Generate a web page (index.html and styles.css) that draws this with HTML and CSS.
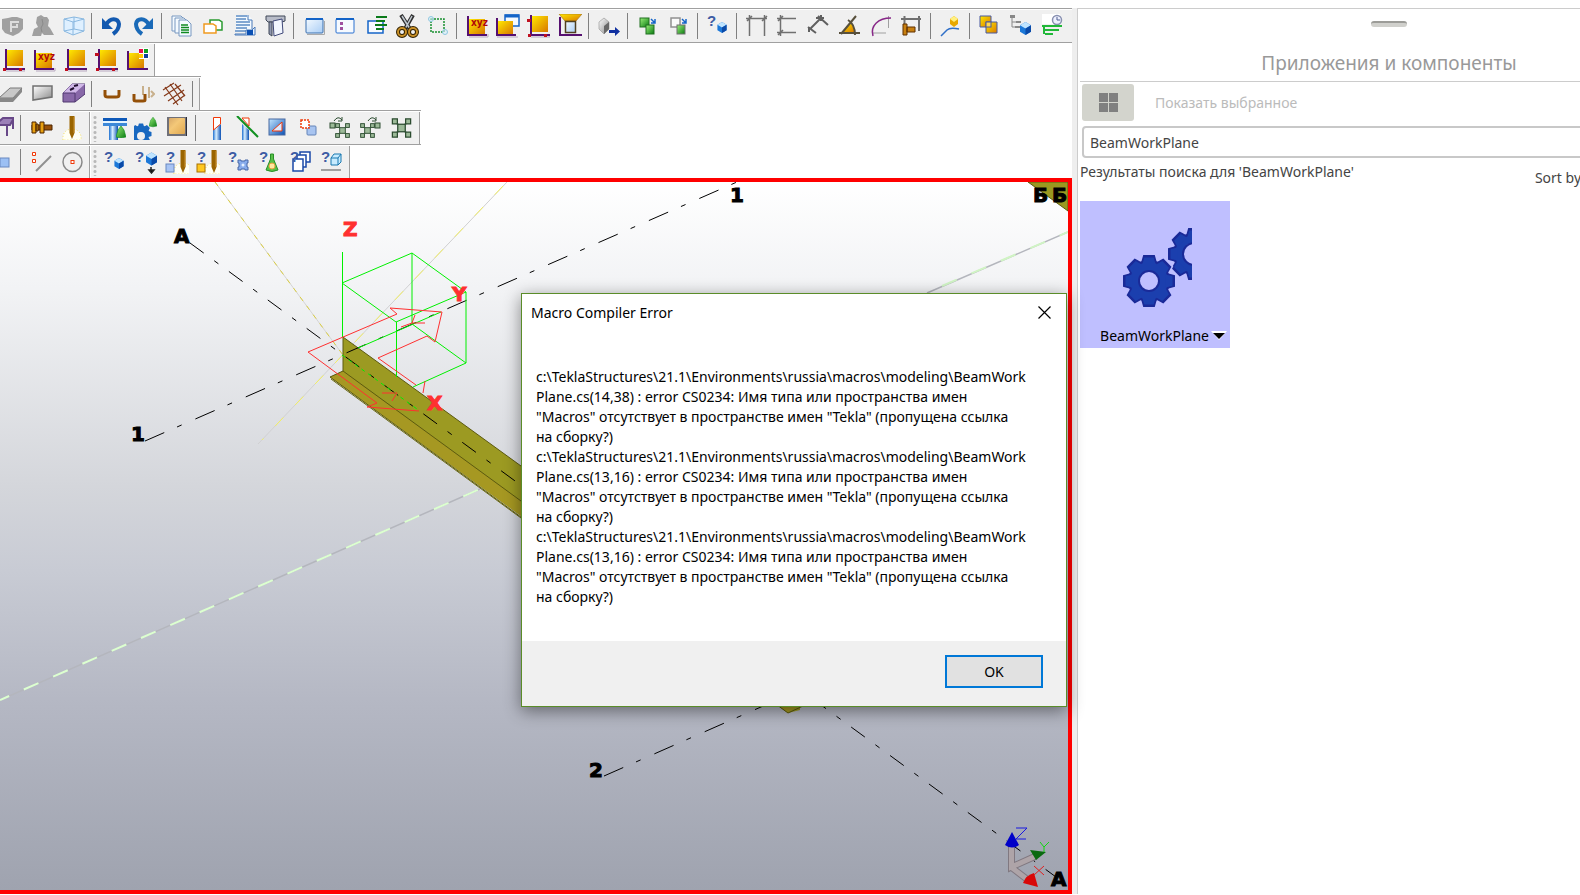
FILE: index.html
```html
<!DOCTYPE html>
<html lang="ru">
<head>
<meta charset="utf-8">
<title>Tekla Structures</title>
<link rel="stylesheet" href="styles.css">
</head>
<body>
<svg class="defs" aria-hidden="true">
  <defs>
    <linearGradient id="gy" x1="0" y1="0" x2="1" y2="1"><stop offset="0" stop-color="#ffe800"/><stop offset="1" stop-color="#d87800"/></linearGradient>
    <linearGradient id="gb" x1="0" y1="0" x2="1" y2="1"><stop offset="0" stop-color="#c4e6ff"/><stop offset="1" stop-color="#0a50b4"/></linearGradient>
    <linearGradient id="gl" x1="0" y1="0" x2="1" y2="1"><stop offset="0" stop-color="#f4faff"/><stop offset="1" stop-color="#a9cdf5"/></linearGradient>
    <linearGradient id="gg" x1="0" y1="0" x2="1" y2="1"><stop offset="0" stop-color="#9cf07a"/><stop offset="1" stop-color="#087a10"/></linearGradient>
    <linearGradient id="gs" x1="0" y1="0" x2="1" y2="1"><stop offset="0" stop-color="#ffffff"/><stop offset="1" stop-color="#8a8a8a"/></linearGradient>
    <linearGradient id="gt" x1="0" y1="0" x2="1" y2="0"><stop offset="0" stop-color="#1d6fd0"/><stop offset=".4" stop-color="#d8efff"/><stop offset="1" stop-color="#0a50b4"/></linearGradient>
    <linearGradient id="gk" x1="0" y1="0" x2="1" y2="1"><stop offset="0" stop-color="#d8a868"/><stop offset=".4" stop-color="#f4c878"/><stop offset="1" stop-color="#e0a850"/></linearGradient>
    <linearGradient id="gv" x1="0" y1="0" x2="0" y2="1"><stop offset="0" stop-color="#ffffff"/><stop offset=".15" stop-color="#f2f3f5"/><stop offset=".43" stop-color="#d4d6db"/><stop offset=".55" stop-color="#c8cbd4"/><stop offset=".73" stop-color="#b5b8c4"/><stop offset="1" stop-color="#9fa3af"/></linearGradient>
    <symbol id="axes" viewBox="0 0 24 24"><path d="M5 23H24V20" stroke="#b8a8c0" fill="none"/><path d="M5 1V21H24" fill="none" stroke="#561070" stroke-width="2"/></symbol>
    <symbol id="plane" viewBox="0 0 24 24"><use href="#axes"/><rect x="6" y="2" width="16" height="16" fill="url(#gy)"/></symbol>
    <symbol id="xyz" viewBox="0 0 24 24"><path d="M4 23H23V20" stroke="#b8a8c0" fill="none"/><path d="M3 2V21H22" fill="none" stroke="#561070" stroke-width="2"/><rect x="4" y="5" width="16" height="15" fill="url(#gy)"/><text x="6" y="12" class="xyz">xyz</text></symbol>
    <symbol id="cube" viewBox="0 0 10 12"><path d="M5 0L10 3V9L5 12L0 9V3Z" fill="#1c78d8"/><path d="M5 0L10 3L5 6L0 3Z" fill="#bfe4ff"/><path d="M5 6L10 3V9L5 12Z" fill="#0a4aa8"/></symbol>
    <symbol id="ask" viewBox="0 0 24 24"><text x="1" y="12" class="ask">?</text></symbol>
    <symbol id="weld" viewBox="0 0 24 24"><path d="M3 24C2 16 8 12 12 14C17 12 22 17 21 24Z" fill="#fffff4" stroke="#f4e26a" stroke-dasharray="1 2"/><path d="M9.500 0H14.500V17L12 23L9.500 17Z" fill="#9a6400"/><path d="M14 1V17" stroke="#c89030"/></symbol>
    <symbol id="flask" viewBox="0 0 10 12"><path d="M5 0L8 4L10 11L5 12L0 11L2 4Z" fill="url(#gg)" stroke="#0a8a1a" stroke-width=".6"/></symbol>
    <symbol id="nodes" viewBox="0 0 16 16"><path d="M2 2L14 14M14 2L2 14" stroke="#8ca08c" stroke-width="1.500"/><g fill="#9cba98" stroke="#2c4c30"><rect x="5" y="5" width="6" height="6"/><rect x=".7" y=".7" width="4" height="4"/><rect x="11.300" y=".7" width="4" height="4"/><rect x=".7" y="11.300" width="4" height="4"/><rect x="11.300" y="11.300" width="4" height="4"/></g></symbol>
    <g id="gear"><circle r="20"/><path d="M-5-25H5L7-18H-7ZM-5 25H5L7 18H-7ZM-25-5V5L-18 7V-7ZM25-5V5L18 7V-7Z"/><path transform="rotate(45)" d="M-5-25H5L7-18H-7ZM-5 25H5L7 18H-7ZM-25-5V5L-18 7V-7ZM25-5V5L18 7V-7Z"/></g>
  </defs>
</svg>

<div class="app">
  <main class="work">
    <div class="band band-first">
      <div class="toolbar from-edge" role="toolbar" aria-label="Стандартная">
        <button aria-label="Модель"><svg viewBox="0 0 24 24"><path d="M3 5L9 4L13 3L18 3L24 5V15L20 19L14 22L6 19L3 15Z" fill="#a0a0a0"/><path d="M12 18V8H20M12 13H18V10" stroke="#dcdcdc" stroke-width="2" fill="none"/></svg></button>
        <button aria-label="Пользователи"><svg viewBox="0 0 24 24"><path d="M2 22L4 15L8 13L6 9L7 3L11 1L14 3L17 3L19 6L18 12L20 14L24 21H14L12 19L11 22Z" fill="#a0a0a0"/><path d="M12 5L13 10L11 14L12 18" stroke="#8a8a8a" fill="none"/></svg></button>
        <button aria-label="Вид"><svg viewBox="0 0 24 24"><path d="M3 5L13 3L23 5V17L12 21L3 17Z" fill="#dff0ff" stroke="#8ab8e0"/><path d="M3 5L12 8L23 5M12 8V21M13 3V15L3 17M13 15L23 17" stroke="#8ab8e0" fill="none"/></svg></button>
        <i class="sep"></i>
        <button aria-label="Отменить"><svg viewBox="0 0 24 24"><path d="M6 11C10 3 18 4 19 10C19 14 16 18 13 20" fill="none" stroke="#1259b0" stroke-width="4"/><path d="M2 4V15H13L10 12L4 6Z" fill="#1259b0"/></svg></button>
        <button aria-label="Повторить"><svg viewBox="0 0 24 24"><path d="M18 11C14 3 6 4 5 10C5 14 8 18 11 20" fill="none" stroke="#1a6ab8" stroke-width="4"/><path d="M22 4V15H11L14 12L20 6Z" fill="#1a6ab8"/></svg></button>
        <i class="sep"></i>
        <button aria-label="Отчеты"><svg viewBox="0 0 24 24"><g fill="#f4faff" stroke="#7898c0"><path d="M2 2H11L14 5V17H2Z"/><path d="M5 4H14L17 7V19H5Z"/><path d="M9 6H17L21 10V22H9Z"/></g><path d="M11 11H18M11 13.500H19M11 16H19M11 18.500H19" stroke="#0f8a20" stroke-width="1.500"/></svg></button>
        <button aria-label="Чертежи"><svg viewBox="0 0 24 24"><path d="M9 6H18L21 8V16H9Z" fill="#fff" stroke="#2a9a30" stroke-width="1.500"/><path d="M3 10H12L15 12V19H3Z" fill="#fff" stroke="#f09a20" stroke-width="1.500"/></svg></button>
        <button aria-label="Список чертежей"><svg viewBox="0 0 24 24"><path d="M4 1H16L20 5V17H4Z" fill="#f4faff"/><path d="M16 1V6H20V15" fill="none" stroke="#4878b8"/><path d="M4 2H15M4 5H14M4 8H18M4 11H18M4 14H15M3 17H14" stroke="#5c8cc4" stroke-width="1.500"/><path d="M3 20H14V16H20L23 13V21H3Z" fill="#e8f2ff" stroke="#4878b8"/><path d="M15 16H21V21H15Z" fill="#0a50b4"/></svg></button>
        <button aria-label="Печать"><svg viewBox="0 0 24 24"><path d="M3 2H22V7L19 8H5L3 6Z" fill="#b8bcc8" stroke="#404858"/><path d="M6 8H9V22L6 20Z" fill="#9098b0" stroke="#404858"/><path d="M10 7L19 5L20 19L11 22Z" fill="#f2f6ff" stroke="#404878"/></svg></button>
        <i class="sep"></i>
        <button aria-label="Окно"><svg viewBox="0 0 24 24"><rect x="4" y="5" width="17" height="14" rx="1" fill="url(#gl)" stroke="#3a70b0"/><path d="M4 5H21" stroke="#1464c8" stroke-width="2"/><path d="M5 20.500H22.500V7" stroke="#aaa" fill="none"/></svg></button>
        <button aria-label="Свойства вида"><svg viewBox="0 0 24 24"><rect x="3" y="5" width="18" height="14" rx="1" fill="#f6faff" stroke="#2a70d0"/><path d="M3 5H21" stroke="#1464c8" stroke-width="2"/><path d="M7 8h3v3H7zM7 13h3v3H7z" fill="#a050a0"/></svg></button>
        <button aria-label="Список видов"><svg viewBox="0 0 24 24"><rect x="4" y="7" width="15" height="12" fill="#f6faff" stroke="#1464c8" stroke-width="1.500"/><path d="M12 3H23M12 7H21M11 11H23M12 15H20" stroke="#0a7a1a" stroke-width="2"/></svg></button>
        <button aria-label="Вырезать"><svg viewBox="0 0 24 24"><path d="M6 1L15 15M18 1L10 15" stroke="#303030" stroke-width="4"/><path d="M7 2L15 15M17 2L10 15" stroke="#c0c8d0" stroke-width="1.500"/><g fill="none"><circle cx="7" cy="18" r="4" stroke="#302000" stroke-width="4"/><circle cx="18" cy="18" r="4" stroke="#302000" stroke-width="4"/><circle cx="7" cy="18" r="4" stroke="#c89028" stroke-width="2"/><circle cx="18" cy="18" r="4" stroke="#c89028" stroke-width="2"/></g></svg></button>
        <button aria-label="Область"><svg viewBox="0 0 24 24"><rect x="5" y="5" width="13" height="13" fill="none" stroke="#189030" stroke-width="1.500" stroke-dasharray="2 1"/><circle cx="5" cy="5" r="2.500" fill="#d8f0ff" fill-opacity=".6" stroke="#90c8e0"/><circle cx="19" cy="18" r="2.500" fill="#d8f0ff" fill-opacity=".6" stroke="#90c8e0"/></svg></button>
        <i class="sep"></i>
        <button aria-label="Рабочая плоскость xyz"><svg viewBox="0 0 24 24"><use href="#xyz"/></svg></button>
        <button aria-label="Плоскость по виду"><svg viewBox="0 0 24 24"><path d="M1 23H22" stroke="#b8a8c0"/><path d="M1 4V21H20" fill="none" stroke="#561070" stroke-width="2"/><rect x="9" y="1" width="14" height="11" fill="#f4faff" stroke="#1464c8" stroke-width="1.500"/><path d="M9 2H23" stroke="#1464c8" stroke-width="3"/><rect x="2" y="7" width="15" height="13" fill="url(#gy)"/></svg></button>
        <button aria-label="Плоскость по точкам"><svg viewBox="0 0 24 24"><use href="#plane" x="-1"/><path d="M0 5h4v3H0zM1 20h3v3H1zM17 20h3v3h-3z" fill="#c01020"/></svg></button>
        <button aria-label="Плоскость детали"><svg viewBox="0 0 24 24"><path d="M2 3V21H24" fill="none" stroke="#561070" stroke-width="2"/><path d="M1 0H24L18 7H7Z" fill="url(#gy)" stroke="#a87820" stroke-width=".7"/><rect x="7.500" y="7.500" width="10" height="11" fill="url(#gl)" stroke="#504020" stroke-width="1.500"/></svg></button>
        <i class="sep"></i>
        <button aria-label="Переместить"><svg viewBox="0 0 24 24"><path d="M7 4L12 8V15L7 20L2 15V8Z" fill="url(#gs)" stroke="#909090" stroke-width=".6"/><path d="M7 12L12 8V15L7 20Z" fill="#686868"/><path d="M12 16H18V13L23 17.500L18 22V19H12Z" fill="#1030a0"/></svg></button>
        <i class="sep"></i>
        <button aria-label="Копировать свойства"><svg viewBox="0 0 24 24"><rect x="4" y="4" width="9" height="9" fill="url(#gg)" stroke="#207020"/><rect x="10" y="11" width="8" height="9" fill="url(#gg)" stroke="#207020"/><path d="M15 5L19 9M19 5V9H15" stroke="#1464c8" fill="none" stroke-width="1.500"/></svg></button>
        <button aria-label="Вставить свойства"><svg viewBox="0 0 24 24"><rect x="4" y="4" width="9" height="9" fill="#fafafa" stroke="#909090" stroke-width="1.500"/><rect x="10" y="11" width="8" height="9" fill="url(#gg)" stroke="#707070"/><path d="M15 5L19 9M19 5V9H15" stroke="#1464c8" fill="none" stroke-width="1.500"/></svg></button>
        <i class="sep"></i>
        <button aria-label="Запрос"><svg viewBox="0 0 24 24"><use href="#ask"/><use href="#cube" x="11" y="8" width="10" height="11"/></svg></button>
        <i class="sep"></i>
        <button aria-label="Размер X"><svg viewBox="0 0 24 24"><path d="M1 4.500H22M4.500 1V22M19.500 1V22M2 7L7 2M17 7L22 2" fill="none" stroke="#707070" stroke-width="1.500"/></svg></button>
        <button aria-label="Размер Y"><svg viewBox="0 0 24 24"><path d="M4.500 1V22M1 4.500H20M1 18.500H20M2 7L7 2M2 21L7 16" fill="none" stroke="#707070" stroke-width="1.500"/></svg></button>
        <button aria-label="Свободный размер"><svg viewBox="0 0 24 24"><path d="M3 15L14 4M1 13L9 19M11 2L21 11M2 18V13M9 4H17M14 1V7" fill="none" stroke="#606060" stroke-width="2"/></svg></button>
        <button aria-label="Угол"><svg viewBox="0 0 24 24"><path d="M4 18L12 9C15 11 17 14 17 18Z" fill="url(#gy)"/><path d="M1 19H22M3 20L18 2M10 6C15 9 17 15 17 21" fill="none" stroke="#58503c" stroke-width="2"/></svg></button>
        <button aria-label="Радиус"><svg viewBox="0 0 24 24"><path d="M4 19H17M19.500 2V14" stroke="#a0a0a0" fill="none"/><path d="M4 22C1 12 9 4 22 4" stroke="#882888" stroke-width="1.500" fill="none"/></svg></button>
        <button aria-label="Размер болта"><svg viewBox="0 0 24 24"><path d="M1 5H21M4.500 2V10M19 2V17" stroke="#707070" stroke-width="2"/><path d="M3 10H7V21H3ZM7 13H15V18H7Z" fill="#c88010" stroke="#603000"/></svg></button>
        <i class="sep"></i>
        <button aria-label="Точка"><svg viewBox="0 0 24 24"><path d="M2 22L8 16Q11 13 20 15" fill="none" stroke="#3070c8" stroke-width="1.500"/><path d="M15 2L19 5V10L15 13L11 10V5Z" fill="#e8a800"/><path d="M15 2L19 5L15 8L11 5Z" fill="#fff080"/></svg></button>
        <i class="sep"></i>
        <button aria-label="Копировать"><svg viewBox="0 0 24 24"><path d="M2 2H13V13H2Z" fill="url(#gy)" stroke="#4858a0"/><path d="M8 8H19V19H8Z" fill="url(#gy)" stroke="#4858a0"/><rect x="8" y="8" width="5" height="5" fill="#ffd850" stroke="#4858a0"/></svg></button>
        <button aria-label="Дерево"><svg viewBox="0 0 24 24"><path d="M1 1h5v3H1zM7 7h5v2H7zM6 12h5v2H6z" fill="#888"/><path d="M3 3V13H9M3 8H9" stroke="#888" fill="none"/><use href="#cube" x="11" y="7" width="11" height="15"/></svg></button>
        <button aria-label="Диспетчер задач"><svg viewBox="0 0 24 24"><path d="M2 0H20V10H2Z" fill="#fff"/><circle cx="17" cy="6" r="4.500" fill="#eef0ff" stroke="#8890b0" stroke-width="1.500"/><path d="M17 3V6H20" stroke="#506090" fill="none"/><path d="M2 12H22M4 16H19M5 20H13M4 12V20" stroke="#20b838" stroke-width="2" fill="none"/></svg></button>
      </div>
    </div>

    <div class="band">
      <div class="toolbar closed inset" role="toolbar" aria-label="Рабочая плоскость">
        <button aria-label="Параллельно"><svg viewBox="0 0 24 24"><use href="#plane"/><path d="M2 20h3v3H2zM18 20h3v3h-3z" fill="#c01020"/></svg></button>
        <button aria-label="xyz"><svg viewBox="0 0 24 24"><use href="#xyz"/></svg></button>
        <button aria-label="Одна точка"><svg viewBox="0 0 24 24"><use href="#plane"/><path d="M2 20h3v3H2z" fill="#c01020"/></svg></button>
        <button aria-label="Три точки"><svg viewBox="0 0 24 24"><use href="#plane"/><path d="M1 5h4v3H1zM2 20h3v3H2zM18 20h3v3h-3z" fill="#c01020"/></svg></button>
        <button aria-label="Инструмент плоскости"><svg viewBox="0 0 24 24"><path d="M3 3V21H23" fill="none" stroke="#561070" stroke-width="2"/><rect x="4" y="5" width="15" height="15" fill="url(#gy)"/><rect x="14" y="0" width="10" height="11" fill="#fff"/><path d="M14 1h4v4h-4z" fill="#e8104c"/><path d="M19 1h4v4h-4z" fill="#10a020"/><path d="M14 6h4v4h-4z" fill="#ffc800"/><path d="M19 6h4v4h-4z" fill="#10409c"/></svg></button>
      </div>
    </div>

    <div class="band band-lined">
      <div class="toolbar closed from-edge" role="toolbar" aria-label="Бетон">
        <button aria-label="Плита"><svg viewBox="0 0 24 24"><path d="M0 16L11 6H23L14 16Z" fill="#c8c8c8" stroke="#787878"/><path d="M0 16H14V20H0ZM14 16L23 6V10L14 20Z" fill="#888"/></svg></button>
        <button aria-label="Панель"><svg viewBox="0 0 24 24"><path d="M3 4H22V15L3 18Z" fill="url(#gs)" stroke="#707070" stroke-width="1.500"/></svg></button>
        <button aria-label="Деталь"><svg viewBox="0 0 24 24"><path d="M2 11L11 2H24V12L14 20H2Z" fill="#8868a8" stroke="#503870"/><path d="M2 11L11 2H24L14 11Z" fill="#d0b8e8"/><path d="M2 11H14V20" stroke="#503870" fill="none"/><path d="M9 8L13 6M13 4L17 3" stroke="#221030" stroke-width="2"/></svg></button>
        <i class="sep"></i>
        <button aria-label="Арматура"><svg viewBox="0 0 24 24"><path d="M5 8V13Q5 15 8 15H16Q19 15 19 13V8" fill="none" stroke="#945008" stroke-width="3"/></svg></button>
        <button aria-label="Группа арматуры"><svg viewBox="0 0 24 24"><path d="M12 4V13M18 5V16M20 9L23 12L20 15" fill="none" stroke="#c8b08c" stroke-width="2"/><path d="M3 12V18Q3 19 5 19H12Q14 19 14 18V12" fill="none" stroke="#945008" stroke-width="3"/></svg></button>
        <button aria-label="Сетка"><svg viewBox="0 0 24 24"><path d="M1 8L12 1M2 14L19 3M6 19L22 8M11 22L23 13M3 5L16 23M8 2L20 19M13 2L23 14" stroke="#843818" fill="none" stroke-width="1.200"/></svg></button>
        <i class="sep"></i>
      </div>
    </div>

    <div class="band band-boxed">
      <div class="toolbar closed cut" role="toolbar" aria-label="Детализация">
        <button aria-label="Стол"><svg viewBox="0 0 24 24"><path d="M5 9L13 2H24L20 9ZM17 9V20M23 4V13" fill="#9c80b8" stroke="#684888" stroke-width="2"/></svg></button>
        <i class="sep"></i>
        <button aria-label="Болт"><svg viewBox="0 0 24 24"><path d="M3 9H23V14H3Z" fill="#985008" stroke="#4c2400"/><path d="M3 6H7V17H3ZM11 6H15V17H11ZM7 8H9V15H7Z" fill="#e8a010" stroke="#4c2400"/></svg></button>
        <button aria-label="Сварка"><svg viewBox="0 0 24 24"><use href="#weld"/></svg></button>
      </div>
      <div class="toolbar closed grip" role="toolbar" aria-label="Компоненты">
        <button aria-label="Узел"><svg viewBox="0 0 24 24"><path d="M6 9H15V24H6Z" fill="url(#gt)"/><path d="M0 2H24V10H0Z" fill="#3c88d8"/><path d="M0 2H24V5H0Z" fill="#0d58b8"/><path d="M0 6H24" stroke="#e4f4ff" stroke-width="2"/><use href="#flask" x="13" y="10" width="10" height="12"/></svg></button>
        <button aria-label="Автоузел"><svg viewBox="0 0 24 24"><use href="#gear" transform="translate(7 18) scale(.42)" fill="#1868c0"/><circle cx="7" cy="20" r="4" fill="#f0f0f0"/><use href="#flask" x="15" y="0" width="8" height="12"/></svg></button>
        <button aria-label="Пользовательский компонент"><svg viewBox="0 0 24 24"><rect x="2" y="1" width="20" height="19" fill="#707078"/><path d="M21.500 1V20" stroke="#303038"/><rect x="4" y="2" width="16" height="16" rx="1" fill="url(#gk)"/></svg></button>
        <i class="sep"></i>
        <button aria-label="Подрезка линией"><svg viewBox="0 0 24 24"><path d="M9 14L17 8V24H9Z" fill="url(#gt)"/><path d="M9.500 14V1.500H16.500V8Z" fill="#fff" stroke="#f03808"/></svg></button>
        <button aria-label="Подрезка плоскостью"><svg viewBox="0 0 24 24"><path d="M7 8L14 14V24H7Z" fill="url(#gt)"/><path d="M7 2H14V10Z" fill="#fff" stroke="#f03808"/><path d="M2 0L23 21" stroke="#109020" stroke-width="2"/></svg></button>
        <button aria-label="Вырез многоугольником"><svg viewBox="0 0 24 24"><rect x="3" y="3" width="16" height="16" fill="url(#gb)" stroke="#4868a0"/><path d="M6 15L16 6V15Z" fill="#dceaff" stroke="#f03808"/></svg></button>
        <button aria-label="Вырез деталью"><svg viewBox="0 0 24 24"><rect x="10" y="10" width="9" height="9" rx="1" fill="#a8c4f0" stroke="#6484b8"/><rect x="4" y="4" width="8" height="8" fill="#fff" stroke="#f03808" stroke-width="1.500" stroke-dasharray="2 1"/></svg></button>
        <button aria-label="Добавить в сборку"><svg viewBox="0 0 24 24"><use href="#nodes" x="7" y="7" width="15" height="15"/><rect x="2" y="7" width="5" height="5" fill="#9cba98" stroke="#2c4c30"/><path d="M6 5Q10 -1 14 4M14 1V5H10" fill="none" stroke="#2c4c30"/></svg></button>
        <button aria-label="Удалить из сборки"><svg viewBox="0 0 24 24"><use href="#nodes" x="1" y="7" width="15" height="15"/><rect x="16" y="7" width="5" height="5" fill="#9cba98" stroke="#2c4c30"/><path d="M9 5Q13 -1 17 4M17 1V5H13" fill="none" stroke="#2c4c30"/></svg></button>
        <button aria-label="Сборка"><svg viewBox="0 0 24 24"><use href="#nodes" x="1" y="2" width="21" height="20"/></svg></button>
      </div>
    </div>

    <div class="band">
      <div class="toolbar closed cut" role="toolbar" aria-label="Точки">
        <button aria-label="Блок"><svg viewBox="0 0 24 24"><rect x="10" y="8" width="9" height="9" fill="#9cc0f4" stroke="#6888c0"/></svg></button>
        <i class="sep"></i>
        <button aria-label="Точки на линии"><svg viewBox="0 0 24 24"><path d="M7 21L22 6" stroke="#909090" stroke-width="2"/><path d="M3.500 2.500h3v3h-3zM3.500 9.500h3v3h-3z" fill="#fff" stroke="#f03808"/></svg></button>
        <button aria-label="Окружность"><svg viewBox="0 0 24 24"><circle cx="12.500" cy="12" r="9.500" fill="none" stroke="#888" stroke-width="1.500"/><rect x="11" y="10.500" width="3" height="3" fill="#fff" stroke="#f03808"/></svg></button>
      </div>
      <div class="toolbar closed grip" role="toolbar" aria-label="Запросы">
        <button aria-label="Объект"><svg viewBox="0 0 24 24"><use href="#ask"/><use href="#cube" x="11" y="8" width="10" height="11"/></svg></button>
        <button aria-label="Центр тяжести"><svg viewBox="0 0 24 24"><use href="#ask"/><use href="#cube" x="12" y="1" width="11" height="16"/><path d="M17 17V20M15 20H20L17.500 23Z" stroke="#222" stroke-width="1.500"/></svg></button>
        <button aria-label="Сварной объект"><svg viewBox="0 0 24 24"><use href="#weld" x="6" width="24" height="24"/><use href="#ask"/><rect x="1" y="14" width="8" height="8" fill="#a8c4f4" stroke="#6888c0"/></svg></button>
        <button aria-label="Сварная сборка"><svg viewBox="0 0 24 24"><use href="#weld" x="6" width="24" height="24"/><use href="#ask"/><rect x="1" y="14" width="8" height="8" fill="#ffc820" stroke="#a87000"/></svg></button>
        <button aria-label="Сборка"><svg viewBox="0 0 24 24"><use href="#ask"/><path d="M11 10h3v1h4v-1h3v3h-1v4h1v3h-3v-1h-4v1h-3v-3h1v-4h-1z" fill="#88acec" stroke="#4868a8"/><circle cx="16" cy="15" r="1.500" fill="#e4f0ff"/></svg></button>
        <button aria-label="Компонент"><svg viewBox="0 0 24 24"><use href="#ask"/><path d="M12.500 4H15.500V9L20 20Q14 23 8 20L12.500 9Z" fill="#58c048" stroke="#289028"/><circle cx="14" cy="16" r="3" fill="#ffe8a0" stroke="#e8a040"/></svg></button>
        <button aria-label="Фазы"><svg viewBox="0 0 24 24"><g fill="#fff" stroke="#1a48a8" stroke-width="1.500"><path d="M11 2H21V12H11Z"/><path d="M8 5H17V17H8Z"/><path d="M4 9H14V21H4Z"/></g><use href="#ask"/></svg></button>
        <button aria-label="Размер объекта"><svg viewBox="0 0 24 24"><use href="#ask"/><path d="M11 8L14 4H21V12L18 15H11Z" fill="#c8ecff" stroke="#1878b0"/><path d="M11 8H18V15M18 8L21 4" fill="none" stroke="#1878b0"/><path d="M1 20H21" stroke="#a0a0a0" stroke-width="2"/></svg></button>
      </div>
    </div>

    <section class="view" aria-label="3D-вид модели">
      <svg class="scene" viewBox="0 182 1068 708" preserveAspectRatio="xMidYMid slice">
        <rect y="182" width="1068" height="708" fill="url(#gv)"/>
        <g fill="none">
          <path d="M215 182L343 355" stroke="#d4d4d4"/><path d="M215 182L343 355" stroke="#dccf40" stroke-dasharray="5 6"/>
          <path d="M507 182L258 444" stroke="#d0d0d2"/><path d="M503 186L262 440" stroke="#f4f060" stroke-dasharray="12 17"/>
          <path d="M0 700L480 489M927 293L1068 232" stroke="#b4b6bd" stroke-width="1.500"/>
          <path d="M0 700L480 489" stroke="#dcffd0" stroke-width="2" stroke-dasharray="16 16" stroke-dashoffset="6"/>
          <path d="M942 286L1068 232" stroke="#d0f4c4" stroke-width="2" stroke-dasharray="16 16"/>
        </g>
        <path d="M343 337L521 466L800 668V710L788 713L521 516L330 377L343 371Z" fill="#9c9a22"/>
        <path d="M343 371L521 501L800 704L788 713L521 516L330 377Z" fill="#a69822"/>
        <path d="M343 371V337L521 466M343 371L521 501M343 371L330 377L788 713L803 706" fill="none" stroke="#5c5a10"/>
        <path d="M331 379L521 518" stroke="#6a6814"/>
        <path d="M1028 182H1068V211Z" fill="#9a9820" stroke="#5c5a10"/>
        <g stroke="#000" fill="none">
          <path d="M190 243L1056 877" stroke-dasharray="17 13 5.200 13"/>
          <path d="M145 441L737 182" stroke-dasharray="21 14 5 15"/>
          <path d="M604 776L770 703" stroke-dasharray="21 14 5 15"/>
        </g>
        <g stroke="#00f000" fill="none">
          <path d="M342.500 252V337M342 283L412 253L466 292V363L413 387M342 283L396 322L466 292M396.500 322V377M412 253V324L466 363M358 348L441 312"/>
          <path d="M342 355L417 409" stroke-dasharray="4 4"/>
        </g>
        <path d="M416 385L378 358L427 336L435 342L442 312L390 308L397 314L308 352L377 403L367 407L419 411M423 393L425 381M382 393H397L392 401M401 327L412 323H425M412 323L415 315" fill="none" stroke="#ff3030"/>
        <g class="mark">
          <text x="174" y="243">A</text><text x="131" y="441">1</text><text x="730" y="202">1</text><text x="589" y="777">2</text>
          <text x="1033" y="202">Б</text><text x="1052" y="202">Б</text><text x="1051" y="886">A</text>
        </g>
        <g class="mark axis"><text x="343" y="236">Z</text><text x="452" y="301">Y</text><text x="427" y="410">X</text></g>
        <g>
          <path d="M1011.500 846V867L1036 856M1011 867L1028 880" fill="none" stroke="#807880" stroke-width="7"/>
          <path d="M1011.500 846V867L1036 856M1011 867L1028 880" fill="none" stroke="#aea4a8" stroke-width="5"/>
          <path d="M1012 832L1019 845Q1012 850 1005 845Z" fill="#0000c8"/>
          <path d="M1046 852L1030 850L1036 860Z" fill="#0a6a10"/>
          <path d="M1038 887L1034 873Q1026 875 1023 883Z" fill="#d80808"/>
          <path d="M1016 828H1027L1016 839H1026" stroke="#1818e0" fill="none"/>
          <path d="M1040 842L1044 847L1049 842M1044 847V852" stroke="#10d810" fill="none"/>
          <path d="M1034 866L1044 875M1044 866L1034 875" stroke="#e02020" fill="none"/>
        </g>
      </svg>
    </section>
  </main>

  <aside class="panel">
    <div class="sheet">
      <i class="handle"></i>
      <h1>Приложения и компоненты</h1>
      <div class="filter">
        <button class="grid-toggle" aria-label="Плитка"><svg viewBox="0 0 19 19"><path d="M0 0h9v9H0zM10 0h9v9h-9zM0 10h9v9H0zM10 10h9v9h-9z" fill="#808080"/></svg></button>
        <span>Показать выбранное</span>
      </div>
      <input class="search" type="text" value="BeamWorkPlane" aria-label="Поиск">
      <div class="results"><p>Результаты поиска для 'BeamWorkPlane'</p><span class="sort">Sort by</span></div>
      <button class="tile">
        <svg class="gears" viewBox="-31 -55 74 82">
          <clipPath id="half"><path d="M0-60H45V60H0Z"/></clipPath>
          <g clip-path="url(#half)"><g transform="translate(45 -27)"><use href="#gear" fill="#1a2a98" stroke="#1a2a98" stroke-width="2"/><use href="#gear" fill="#1b3fae" transform="scale(.94)"/><circle r="11" fill="#bfbfff" stroke="#1a2a98" stroke-width="2"/></g></g>
          <use href="#gear" fill="#1a2a98" stroke="#bfbfff" stroke-width="5"/>
          <use href="#gear" fill="#1a2a98" stroke="#1a2a98" stroke-width="2"/><use href="#gear" fill="#1b3fae" transform="scale(.94)"/><circle r="10" fill="#bfbfff" stroke="#1a2a98" stroke-width="2"/>
        </svg>
        <span class="caption">BeamWorkPlane<svg class="caret" viewBox="0 0 16 10"><path d="M0 0H16L8 9Z" fill="#fff"/><path d="M2 2H14L8 8Z" fill="#000"/></svg></span>
      </button>
    </div>
  </aside>

  <div class="dialog" role="dialog" aria-labelledby="dlg-title">
    <header><h2 id="dlg-title">Macro Compiler Error</h2><button class="close" aria-label="Закрыть"><svg viewBox="0 0 13 13"><path d="M.5.5L12.500 12.500M12.500.5L.5 12.500" stroke="#000" stroke-width="1.200"/></svg></button></header>
    <div class="message">
      <p>c:\TeklaStructures\21.1\Environments\russia\macros\modeling\BeamWork<br>Plane.cs(14,38) : error CS0234: Имя типа или пространства имен<br>"Macros" отсутствует в пространстве имен "Tekla" (пропущена ссылка<br>на сборку?)</p>
      <p>c:\TeklaStructures\21.1\Environments\russia\macros\modeling\BeamWork<br>Plane.cs(13,16) : error CS0234: Имя типа или пространства имен<br>"Macros" отсутствует в пространстве имен "Tekla" (пропущена ссылка<br>на сборку?)</p>
      <p>c:\TeklaStructures\21.1\Environments\russia\macros\modeling\BeamWork<br>Plane.cs(13,16) : error CS0234: Имя типа или пространства имен<br>"Macros" отсутствует в пространстве имен "Tekla" (пропущена ссылка<br>на сборку?)</p>
    </div>
    <footer><button class="ok">OK</button></footer>
  </div>
</div>
</body>
</html>
```
FILE: styles.css
```css
* { box-sizing: border-box; }
body { margin: 0; background: #fff; color: #444; font-family: "Noto Sans", "Open Sans", sans-serif; font-size: 14px; line-height: 20px; }
h1, h2, p { margin: 0; font-weight: 400; }
button { border: 0; padding: 0; background: none; font: inherit; color: inherit; }
.defs { position: absolute; width: 0; height: 0; }
.xyz { font: bold 10px "DejaVu Sans Condensed", "DejaVu Sans", sans-serif; fill: #b00808; }
.ask { font: bold 15px "Liberation Sans", sans-serif; fill: #3c5ca4; }

.app { position: relative; display: grid; grid-template-columns: minmax(0, 1fr) 508px; min-height: 100vh; padding: 8px 0 1px; overflow: hidden; }
.work { display: flex; flex-direction: column; align-items: flex-start; min-width: 0; }

.band { display: flex; padding-top: 1px; }
.band-first { width: 100%; border-top: 1px solid #a0a0a0; border-bottom: 1px solid #a0a0a0; overflow: hidden; }
.band-lined { border-top: 1px solid #a0a0a0; padding-right: 1px; }
.band-boxed { border-top: 1px solid #a0a0a0; border-bottom: 1px solid #a0a0a0; padding-right: 1px; }
.toolbar { display: flex; height: 32px; background: #f0f0f0; }
.band-first .toolbar { flex: 1; }
.toolbar button { flex: none; display: flex; align-items: center; justify-content: center; width: 31px; }
.toolbar svg { width: 24px; height: 24px; }
.from-edge { margin-left: -5px; }
.inset { margin-left: -3px; }
.cut { margin-left: -14px; }
.closed { border-right: 1px solid #a0a0a0; padding-right: 2px; }
.sep { flex: none; width: 8px; padding: 3px 4px 3px 3px; background: #808080 content-box; }
.grip { border-left: 1px solid #fff; }
.grip::before { content: ""; width: 8px; margin: 3px 0 2px; background: radial-gradient(circle, #b8b8b8 1px, transparent 2px) 2px 0 / 4px 5px repeat-y; }

.view { flex: 1; align-self: stretch; display: flex; min-height: 300px; border: 4px solid #f00; border-left: 0; }
.scene { flex: 1; width: 100%; min-height: 0; display: block; }
.mark { font: bold 20px "DejaVu Sans", sans-serif; fill: #000; stroke: #000; }
.axis { fill: #ff3030; stroke: #ff3030; }

.panel { margin-left: 5px; border-left: 1px solid #ccc; border-top: 1px solid #ccc; min-width: 0; box-shadow: -5px 0 0 #eee; }
.sheet { width: calc(100% + 118px); padding-left: 2px; display: flex; flex-direction: column; align-items: flex-start; }
.handle { align-self: center; width: 36px; height: 6px; margin-top: 12px; border-radius: 3px; background: #d0d0cc; border-top: 2px solid #9c9c98; }
.sheet h1 { align-self: stretch; height: 55px; padding-top: 20px; border-bottom: 1px solid #ccc; text-align: center; color: #999; font-size: 19px; line-height: 32px; }
.filter { display: flex; align-items: center; gap: 21px; padding: 2px 0 5px 2px; color: #bbb; }
.grid-toggle { display: flex; align-items: center; justify-content: center; width: 52px; height: 37px; border-radius: 3px; background: #d3d4cd; }
.grid-toggle svg { width: 19px; height: 19px; }
.search { align-self: stretch; height: 32px; margin-left: 2px; padding: 0 6px; border: 2px solid #c8c8c8; border-radius: 4px; color: #444; font: inherit; background: #fff; }
.results { display: flex; gap: 181px; height: 43px; padding-top: 4px; }
.sort { padding-top: 6px; white-space: nowrap; }
.tile { width: 150px; display: flex; flex-direction: column; align-items: center; padding: 25px 0 2px; background: #bfbfff; color: #000; }
.gears { width: 74px; height: 82px; margin-bottom: 18px; }
.caption { align-self: flex-end; display: flex; align-items: center; gap: 2px; padding-right: 3px; }
.caret { width: 16px; height: 10px; }

.dialog { position: absolute; left: 521px; top: 293px; width: 546px; border: 1px solid #5a8c28; background: #fff; color: #000; box-shadow: 0 4px 16px rgba(0, 0, 0, .45); }
.dialog header { display: flex; align-items: center; justify-content: space-between; height: 37px; padding: 0 15px 0 9px; }
.dialog h2 { font-size: 14px; }
.close { display: flex; }
.close svg { width: 13px; height: 13px; }
.message { padding: 36px 14px 34px; white-space: nowrap; }
.dialog footer { display: flex; justify-content: flex-end; padding: 14px 23px 18px; background: #f0f0f0; }
.ok { width: 98px; height: 33px; border: 2px solid #0078d7; background: #e1e1e1; }
```
